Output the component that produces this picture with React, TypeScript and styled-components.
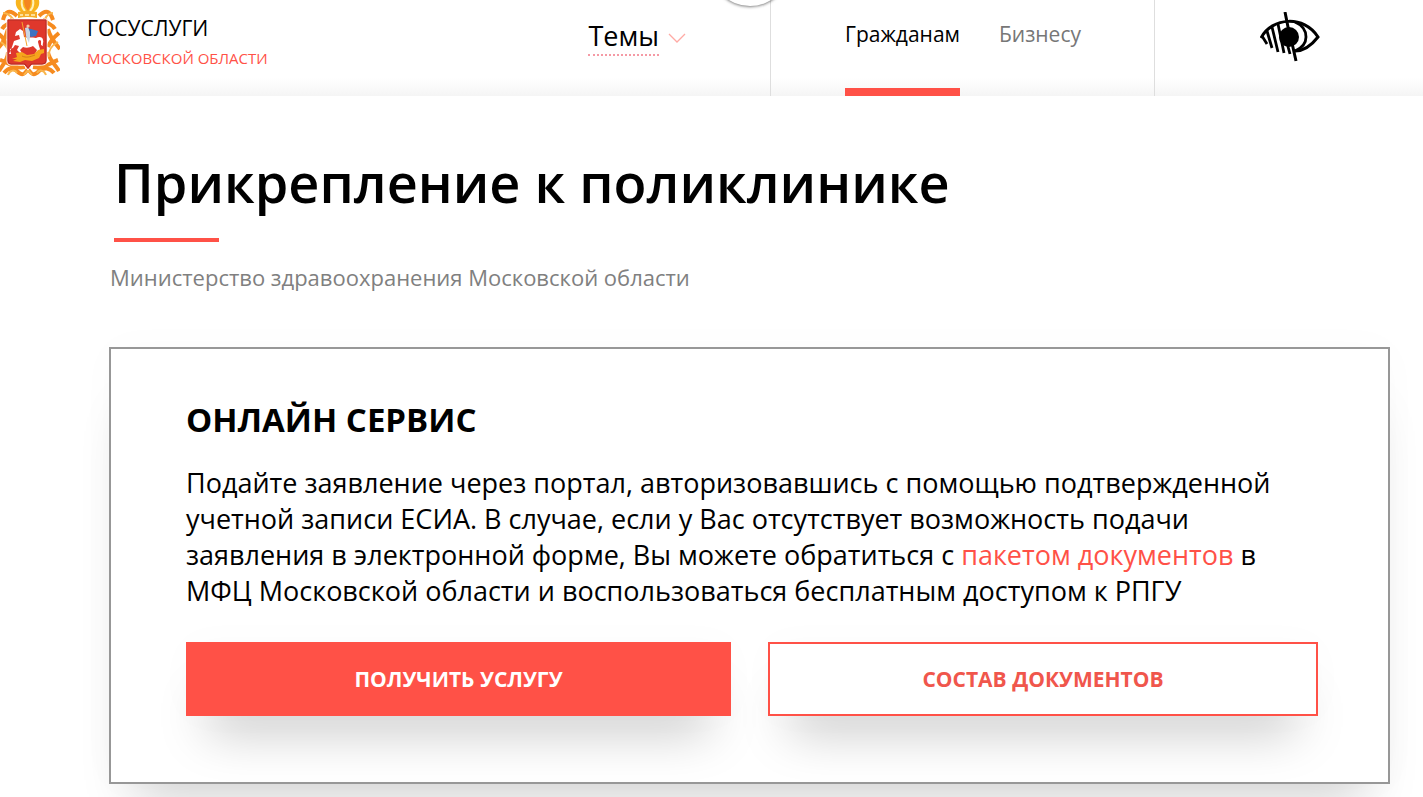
import React from "react";
import styled, { createGlobalStyle } from "styled-components";

const accent = "#ff5147";

const GlobalStyle = createGlobalStyle`
  *, *::before, *::after { box-sizing: border-box; }
  body {
    margin: 0;
    background: #fff;
    color: #000;
    font-family: "Open Sans", "Noto Sans", sans-serif;
  }
  h1, h2, p { margin: 0; }
  a { color: inherit; text-decoration: none; }
  button { font: inherit; cursor: pointer; }
`;

const Header = styled.header`
  position: relative;
  display: grid;
  grid-template-columns: 771fr 384fr 268fr;
  height: 96px;
  background: linear-gradient(#fff 78px, #f5f5f5);
`;

const HeaderMain = styled.div`
  display: flex;
  justify-content: space-between;
  padding-right: 84px;
  border-right: 1px solid #dedede;
`;

const Brand = styled.a`
  display: flex;
  gap: 27px;
`;

const BrandText = styled.span`
  display: flex;
  flex-direction: column;
  padding-top: 13px;
`;

const BrandName = styled.span`
  font-size: 21px;
  line-height: 30px;
`;

const BrandRegion = styled.span`
  color: ${accent};
  font-size: 15px;
  line-height: 30px;
`;

const TopicsButton = styled.button`
  display: flex;
  align-items: flex-start;
  gap: 9px;
  padding: 18px 0 0;
  border: 0;
  background: none;
  color: #000;
  font-size: 27px;
  line-height: 36px;
`;

const TopicsLabel = styled.span`
  border-bottom: 2px dotted #f59aa5;
`;

const Chevron = styled.svg`
  width: 18px;
  height: 11px;
  margin-top: 15px;
`;

const RoundTab = styled.span`
  position: absolute;
  top: -74px;
  left: calc(50% - 2px);
  width: 80px;
  height: 80px;
  border-radius: 50%;
  background: #fff;
  box-shadow: 0 1px 3px rgba(0, 0, 0, 0.5);
`;

const RoundTabClip = styled.div`
  position: absolute;
  inset: 0 0 auto 0;
  height: 20px;
  overflow: hidden;
  pointer-events: none;
`;

const Audience = styled.nav`
  display: flex;
  gap: 39px;
  padding-left: 74px;
  border-right: 1px solid #dedede;
`;

const AudienceLink = styled.a<{ $active?: boolean }>`
  padding-top: 19px;
  border-bottom: 8px solid ${(p) => (p.$active ? accent : "transparent")};
  color: ${(p) => (p.$active ? "#000" : "#777")};
  font-size: 21px;
  line-height: 30px;
`;

const VisionButton = styled.button`
  display: flex;
  justify-content: center;
  padding: 12px 0 0 2px;
  border: 0;
  background: none;
`;

const Main = styled.main`
  padding: 54px 33px 13px 109px;
`;

const Title = styled.h1`
  padding-left: 5px;
  font-size: 54px;
  font-weight: 600;
  line-height: 64px;

  &::after {
    content: "";
    display: block;
    width: 105px;
    height: 4px;
    margin-top: 24px;
    background: ${accent};
  }
`;

const Ministry = styled.p`
  margin-top: 20px;
  padding-left: 1px;
  color: #808080;
  font-size: 22px;
  line-height: 30px;
`;

const Card = styled.section`
  margin-top: 55px;
  padding: 50px 70px 66px 75px;
  border: 2px solid #979797;
  background: #fff;
  box-shadow: 0 40px 50px -26px rgba(0, 0, 0, 0.18), 0 0 40px rgba(0, 0, 0, 0.02);
`;

const CardTitle = styled.h2`
  font-size: 33px;
  font-weight: 700;
  line-height: 42px;
`;

const CardText = styled.p`
  margin-top: 24px;
  font-size: 27px;
  line-height: 36px;

  a { color: ${accent}; }
`;

const Actions = styled.div`
  display: grid;
  grid-template-columns: 545fr 550fr;
  gap: 37px;
  margin-top: 33px;
`;

const ActionButton = styled.button<{ $primary?: boolean }>`
  height: 74px;
  padding: 0;
  border: 2px solid ${accent};
  background: ${(p) => (p.$primary ? accent : "#fff")};
  color: ${(p) => (p.$primary ? "#fff" : "#f0564c")};
  font-size: 21px;
  font-weight: 700;
  box-shadow: 0 36px 50px -22px rgba(0, 0, 0, 0.27), 0 0 40px rgba(0, 0, 0, 0.02);
`;

function Emblem() {
  return (
    <svg width="60" height="78" viewBox="0 0 60 78" aria-hidden="true">
      <g fill="none" stroke="#f68b1f" strokeWidth="4">
        <path d="M3 20C5 11 10 9 17 16M2 29C6 22 12 25 12 18M53 20c-3-9-7-11-14-4M55 29c-4-7-10-4-10-11" />
        <path d="M-1 34c5 4 7 9 9 13M59 33c-5 4-9 8-11 14M8 29c-2 9-6 16-12 21M48 29c2 9 7 14 12 20" />
        <path d="M8 52c0 8-5 12-9 19M48 52c1 8 7 12 11 19M0 60c10 3 14 9 25 7M58 60c-9 3-13 9-25 7M4 73c4-5 8-6 13-2 5 5 7 4 11-2 4 6 6 7 11 2 5-4 11-3 15 2" />
      </g>
      <g fill="none" stroke="#f9b64c" strokeWidth="2">
        <path d="M3 13c4 0 7 2 10 6M53 13c-4 0-6 2-8 6M1 42c6 4 9 8 8 15M58 42c-7 4-10 8-9 15" />
        <path d="M8 75c2-5 7-6 9-2m29 2c-2-5-7-6-9-2M24 75l4-5 4 5" />
      </g>
      <path d="M16 0c-1 5 1 9 5 12h13c4-3 6-7 5-12z" fill="#f8b41e" />
      <path d="M22 0c-1 5 1 9 3 11M33 0c1 5-1 9-3 11" fill="none" stroke="#fff1b8" strokeWidth="2" />
      <path d="M24 0h7c0 4-1 8-3 11-3-3-4-7-4-11" fill="#f48620" />
      <path d="M18 12q10-2 19 0v6q-10-2-19 0z" fill="#f6ad27" />
      <path d="M20 15h3m2 0h4m2 0h4" stroke="#fff0be" strokeWidth="1.5" />
      <path d="M7 19h40v42c0 3-2 4-5 4H32l-4 5-4-5H11c-3 0-4-2-4-4z" fill="#df382c" stroke="#fff" strokeWidth="1" />
      <path d="M8 20h38v41q0 3-4 3H31l-3 4-3-4H11q-3 0-3-3z" fill="none" stroke="#b52c25" />
      <path d="M12 47l2-6 6-2-1-4-4 1 1-4 4-3 3 2 1 6c4 1 8 0 12 1 3-2 7-1 7 2 1 2-1 4 0 6l-2-1v-4c-1-2-3-1-3 1l1 4 1 3-2 5h-3l2-4-4-4c-4 2-7 2-10 1l-3 3 2 3h-2l-3-3 2-4-4-1-2 3-3 1 1 5h-2z" fill="#fff" />
      <path d="m27 28 4 1 7 2-2 5-5 1-4-3z" fill="#3d73c2" />
      <path d="m25 28 3-1 2 5v5l-1 6-3-7z" fill="#c7d6e4" />
      <circle cx="28" cy="26" r="1.6" fill="#f5c7a0" />
      <path d="m22 22 5 24" stroke="#f5a62c" strokeWidth="1" />
      <path d="m12 59 5-2-1-4 6-1 5 3 7-1 4-4 6-1v4l-3 1-2 4-7 3-7-1-5 2-7-1 4-2z" fill="#f6a51c" />
      <path d="M22 56c4 2 8 1 13-1" fill="none" stroke="#c66b16" strokeWidth=".7" />
    </svg>
  );
}

function LowVisionIcon() {
  return (
    <svg width="60" height="50" viewBox="0 0 60 50" aria-hidden="true">
      <path d="M1 26C12 5 44 3 58 25C51 34 44 39 35 39" fill="none" stroke="#000" strokeWidth="3" />
      <path d="M2 24l5 8M7 19l5 17M12 15l6 25M18 12l6 29M24 20l6 22" stroke="#000" strokeWidth="2.8" fill="none" />
      <path d="M35 10c7 3 11 8 11 15 0 7-4 11-11 14" fill="none" stroke="#000" strokeWidth="2.8" />
      <circle cx="29" cy="25" r="10" />
      <path d="m25 0 4 20M32 31l4 18" fill="none" stroke="#000" strokeWidth="3" />
    </svg>
  );
}

export default function App() {
  return (
    <>
      <GlobalStyle />
      <Header>
        <HeaderMain>
          <Brand href="#">
            <Emblem />
            <BrandText>
              <BrandName>ГОСУСЛУГИ</BrandName>
              <BrandRegion>МОСКОВСКОЙ ОБЛАСТИ</BrandRegion>
            </BrandText>
          </Brand>
          <TopicsButton type="button">
            <TopicsLabel>Темы</TopicsLabel>
            <Chevron viewBox="0 0 18 11" aria-hidden="true">
              <path d="m1 1 8 8 8-8" fill="none" stroke="#ffaaa5" strokeWidth="1.3" />
            </Chevron>
          </TopicsButton>
        </HeaderMain>
        <Audience>
          <AudienceLink href="#" $active>Гражданам</AudienceLink>
          <AudienceLink href="#">Бизнесу</AudienceLink>
        </Audience>
        <VisionButton type="button" aria-label="Версия для слабовидящих">
          <LowVisionIcon />
        </VisionButton>
        <RoundTabClip><RoundTab /></RoundTabClip>
      </Header>
      <Main>
        <Title>Прикрепление к поликлинике</Title>
        <Ministry>Министерство здравоохранения Московской области</Ministry>
        <Card>
          <CardTitle>ОНЛАЙН СЕРВИС</CardTitle>
          <CardText>
            Подайте заявление через портал, авторизовавшись с помощью подтвержденной
            учетной записи ЕСИА. В случае, если у Вас отсутствует возможность подачи
            заявления в электронной форме, Вы можете обратиться с{" "}
            <a href="#">пакетом документов</a> в МФЦ Московской области и
            воспользоваться бесплатным доступом к РПГУ
          </CardText>
          <Actions>
            <ActionButton type="button" $primary>ПОЛУЧИТЬ УСЛУГУ</ActionButton>
            <ActionButton type="button">СОСТАВ ДОКУМЕНТОВ</ActionButton>
          </Actions>
        </Card>
      </Main>
    </>
  );
}
